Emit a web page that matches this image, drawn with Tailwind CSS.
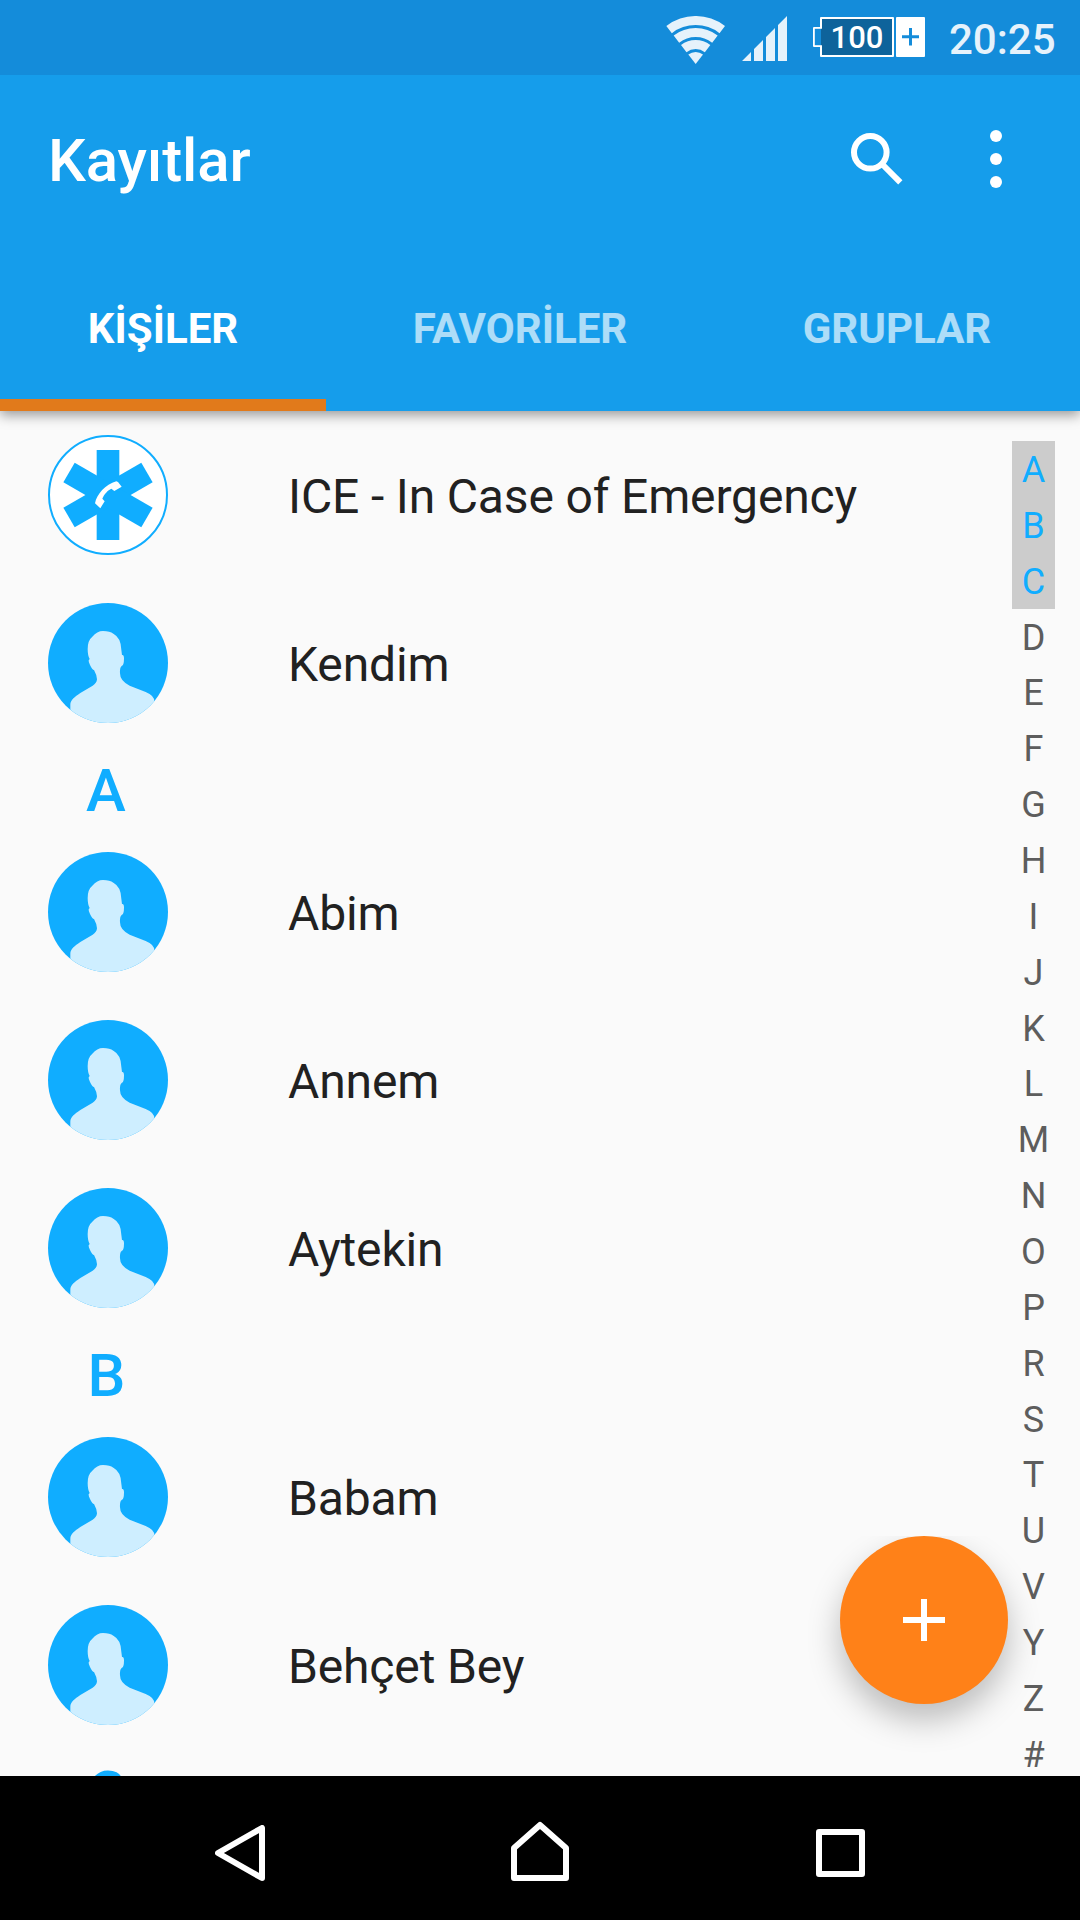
<!DOCTYPE html>
<html lang="tr">

<head>
  <meta charset="UTF-8">
  <meta name="viewport" content="width=device-width, initial-scale=1.0">
  <title>Kayıtlar</title>
  <script src="https://cdn.jsdelivr.net/npm/@tailwindcss/browser@4"></script>
</head>

<body class="bg-black font-['Roboto',sans-serif]">
  <!-- Shared icons -->
  <svg class="hidden">
    <symbol id="person" viewBox="0 0 360 360">
      <rect width="360" height="360" fill="#10adff" />
      <path fill="#ceeeff" d="M67 360V305C67 292 80 281 97 270L134 248Q146 241 147 229Q146 215 138 201Q133 201 126 186Q121 176 122 172L125 168Q119 158 119 138Q119 112 133 101Q147 84 165 84Q186 85 196 92Q219 104 220 140L222 156Q228 154 228 167Q228 186 221 189Q215 193 216 211Q216 234 245 248L293 267Q320 278 319 296V360Z" />
    </symbol>
  </svg>

  <div class="w-[1080px] h-[1920px] flex flex-col overflow-hidden bg-[#fafafa]">
    <!-- Status bar -->
    <div class="h-[75px] shrink-0 bg-[#148cda] flex items-center pl-[666px] relative z-20">
      <svg class="w-[59px] h-[49px] mt-[5px]" viewBox="-1 0 177 147" fill="#e6f2fb">
        <path d="M0 30A144 144 0 0 1 176 30L159.500 51.400A117 117 0 0 0 16.500 51.400Z" />
        <path d="M22 58.500A108 108 0 0 1 154 58.500L137.500 79.900A81 81 0 0 0 38.500 79.900Z" />
        <path d="M44 87A72 72 0 0 1 132 87L115.500 108.400A45 45 0 0 0 60.500 108.400Z" />
        <path d="M66 115.500A36 36 0 0 1 110 115.500L88 144Z" />
      </svg>
      <svg class="w-[45px] h-[45px] ml-[17px] mt-[2px]" viewBox="0 0 45 45" fill="#e6f2fb">
        <path d="M0 45L9 36V45ZM12 33L21 24V45H12ZM24 21L33 12V45H24ZM36 9L45 0V45H36Z" />
      </svg>
      <div class="relative ml-[26px] w-[112px] h-10 -mt-px">
        <svg class="absolute inset-0" width="112" height="40" viewBox="0 0 112 40">
          <path d="M8 1H80V39H8V29H1V11H8Z" fill="#0e639b" stroke="#fff" stroke-width="2" stroke-linejoin="round" />
          <path d="M1.800 11.800H8V28.200H1.800Z" fill="#148cda" />
          <rect x="83" width="29" height="40" rx="1" fill="#fff" />
          <path d="M89 19.700H106M97.500 11V28.500" stroke="#148cda" stroke-width="3" />
        </svg>
        <span class="absolute left-[9px] top-px w-[70px] text-center text-[31px] leading-10 font-medium text-white">100</span>
      </div>
      <span class="ml-6 text-[42px] leading-[50px] font-medium text-[#e6f2fb] mt-[4px]">20:25</span>
    </div>

    <!-- App bar -->
    <header class="h-[336px] shrink-0 bg-[#159deb] flex flex-col relative z-10 shadow-[0_4px_12px_rgba(0,0,0,0.4)]">
      <div class="h-[168px] flex items-center pl-12">
        <h1 class="flex-1 text-[60px] leading-[70px] font-medium text-white mt-[4px] tracking-[-0.15px]">Kayıtlar</h1>
        <svg class="w-[54px] h-[54px] mr-[86px]" viewBox="0 0 54 54" fill="none" stroke="#fff" stroke-width="6">
          <circle cx="20.300" cy="20.300" r="16.300" />
          <path d="M32.500 32.500L50.300 50.300" />
        </svg>
        <svg class="w-3 h-[60px] mr-[78px]" viewBox="0 0 12 60" fill="#fff">
          <circle cx="6" cy="7" r="6" />
          <circle cx="6" cy="30" r="6" />
          <circle cx="6" cy="53" r="6" />
        </svg>
      </div>
      <nav class="flex-1 flex text-[42px] leading-[50px] font-bold text-white/65">
        <div class="w-[326px] flex flex-col text-white">
          <span class="flex-1 flex items-center justify-center pt-4">KİŞİLER</span>
          <div class="h-3 bg-[#e17a1b]"></div>
        </div>
        <div class="w-[388px] pt-4 pb-3 flex items-center justify-center">FAVORİLER</div>
        <div class="w-[366px] pt-4 pb-3 flex items-center justify-center">GRUPLAR</div>
      </nav>
    </header>

    <main class="h-[1365px] shrink-0 flex relative overflow-hidden">
      <!-- Contacts -->
      <div class="flex-1 text-5xl text-[#212121]">
        <div class="h-[168px] flex items-center pl-12 gap-[120px]">
          <svg class="w-[120px] h-[120px]" viewBox="0 0 360 360">
            <circle cx="180" cy="180" r="177" fill="#fff" stroke="#10adff" stroke-width="6" />
            <g fill="#10adff">
              <rect x="146" y="45" width="68" height="270" />
              <rect x="146" y="45" width="68" height="270" transform="rotate(60 180 180)" />
              <rect x="146" y="45" width="68" height="270" transform="rotate(120 180 180)" />
            </g>
            <path fill="#fff" d="M141 205C146 178 172 148 205 139L210 141L221 155L199 168L190 161C180 165 168 178 163 191L170 199L157 220Z" />
          </svg>
          <span class="mt-1 tracking-[-0.15px]">ICE - In Case of Emergency</span>
        </div>
        <div class="h-[168px] flex items-center pl-12 gap-[120px]">
          <svg class="w-[120px] h-[120px] rounded-full"><use href="#person" /></svg>
          <span class="mt-1 tracking-[-0.15px]">Kendim</span>
        </div>
        <div class="h-[81px] w-[212px] text-center text-[60px] leading-[87px] font-medium text-[#10adff]">A</div>
        <div class="h-[168px] flex items-center pl-12 gap-[120px]">
          <svg class="w-[120px] h-[120px] rounded-full"><use href="#person" /></svg>
          <span class="mt-1 tracking-[-0.15px]">Abim</span>
        </div>
        <div class="h-[168px] flex items-center pl-12 gap-[120px]">
          <svg class="w-[120px] h-[120px] rounded-full"><use href="#person" /></svg>
          <span class="mt-1 tracking-[-0.15px]">Annem</span>
        </div>
        <div class="h-[168px] flex items-center pl-12 gap-[120px]">
          <svg class="w-[120px] h-[120px] rounded-full"><use href="#person" /></svg>
          <span class="mt-1 tracking-[-0.15px]">Aytekin</span>
        </div>
        <div class="h-[81px] w-[213px] text-center text-[60px] leading-[87px] font-medium text-[#10adff]">B</div>
        <div class="h-[168px] flex items-center pl-12 gap-[120px]">
          <svg class="w-[120px] h-[120px] rounded-full"><use href="#person" /></svg>
          <span class="mt-1 tracking-[-0.15px]">Babam</span>
        </div>
        <div class="h-[168px] flex items-center pl-12 gap-[120px]">
          <svg class="w-[120px] h-[120px] rounded-full"><use href="#person" /></svg>
          <span class="mt-1 tracking-[-0.15px]">Behçet Bey</span>
        </div>
        <div class="h-[81px] w-[214px] text-center text-[60px] leading-[87px] font-medium text-[#10adff]">C</div>
      </div>

      <!-- Alphabet index -->
      <div class="w-[43px] mr-[25px] mt-[30px] text-4xl text-[#5d5d5d] text-center">
        <div class="bg-[#ccc] text-[#10adff]">
          <div class="h-[55.86px] leading-[58px]">A</div>
          <div class="h-[55.86px] leading-[58px]">B</div>
          <div class="h-[55.86px] leading-[58px]">C</div>
        </div>
        <div class="h-[55.86px] leading-[58px]">D</div>
        <div class="h-[55.86px] leading-[58px]">E</div>
        <div class="h-[55.86px] leading-[58px]">F</div>
        <div class="h-[55.86px] leading-[58px]">G</div>
        <div class="h-[55.86px] leading-[58px]">H</div>
        <div class="h-[55.86px] leading-[58px]">I</div>
        <div class="h-[55.86px] leading-[58px]">J</div>
        <div class="h-[55.86px] leading-[58px]">K</div>
        <div class="h-[55.86px] leading-[58px]">L</div>
        <div class="h-[55.86px] leading-[58px]">M</div>
        <div class="h-[55.86px] leading-[58px]">N</div>
        <div class="h-[55.86px] leading-[58px]">O</div>
        <div class="h-[55.86px] leading-[58px]">P</div>
        <div class="h-[55.86px] leading-[58px]">R</div>
        <div class="h-[55.86px] leading-[58px]">S</div>
        <div class="h-[55.86px] leading-[58px]">T</div>
        <div class="h-[55.86px] leading-[58px]">U</div>
        <div class="h-[55.86px] leading-[58px]">V</div>
        <div class="h-[55.86px] leading-[58px]">Y</div>
        <div class="h-[55.86px] leading-[58px]">Z</div>
        <div class="h-[55.86px] leading-[58px]">#</div>
      </div>

      <!-- Add contact -->
      <div class="absolute right-[72px] bottom-[72px] w-[168px] h-[168px] rounded-full bg-[#ff8118] shadow-[0_16px_32px_rgba(0,0,0,0.25)] [clip-path:inset(0_-60px_-60px_-60px)] flex items-center justify-center">
        <svg class="w-[42px] h-[42px]" viewBox="0 0 42 42" stroke="#fff" stroke-width="6">
          <path d="M0 21H42M21 0V42" />
        </svg>
      </div>
    </main>

    <!-- Navigation bar -->
    <div class="h-36 shrink-0 bg-black flex items-center pt-[9px] pl-[215px]">
      <svg class="w-[50px] h-14" viewBox="0 0 50 56" fill="none" stroke="#fff" stroke-width="6" stroke-linejoin="round">
        <path d="M47 3V53L3 28Z" />
      </svg>
      <svg class="w-[58px] h-[60px] ml-[246px] -mt-[3px]" viewBox="0 0 58 60" fill="none" stroke="#fff" stroke-width="6" stroke-linejoin="round">
        <path d="M29 4L55 27V57H3V27Z" />
      </svg>
      <svg class="w-[49px] h-[48px] ml-[247px]" viewBox="0 0 49 48" fill="none" stroke="#fff" stroke-width="6" stroke-linejoin="round">
        <path d="M3 3H46V45H3Z" />
      </svg>
    </div>
  </div>
</body>

</html>
